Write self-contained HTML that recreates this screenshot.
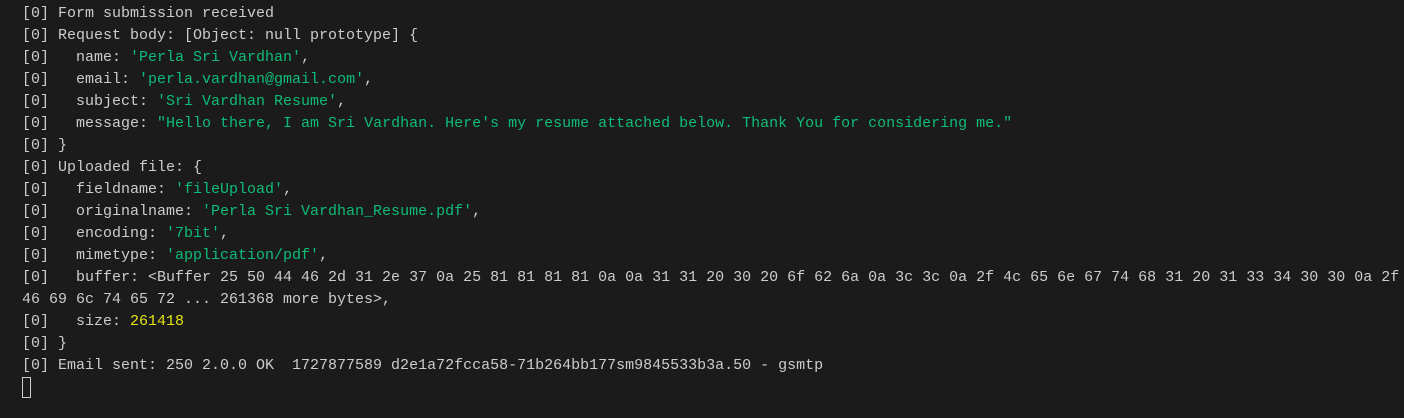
<!DOCTYPE html>
<html><head><style>
html,body{margin:0;padding:0;background:#1b1b1b;width:1404px;height:418px;overflow:hidden}
pre{margin:0;position:absolute;left:22px;top:3px;font-family:"Liberation Mono",monospace;font-size:15px;line-height:22px;color:#cccccc;white-space:pre}
.g{color:#0dbc79}.y{color:#e5e510}
.cur{position:absolute;left:22px;top:377px;width:7px;height:19px;border:1px solid #cccccc}
</style></head><body>
<pre>[0] Form submission received
[0] Request body: [Object: null prototype] {
[0]   name: <span class="g">'Perla Sri Vardhan'</span>,
[0]   email: <span class="g">'perla.vardhan@gmail.com'</span>,
[0]   subject: <span class="g">'Sri Vardhan Resume'</span>,
[0]   message: <span class="g">"Hello there, I am Sri Vardhan. Here's my resume attached below. Thank You for considering me."</span>
[0] }
[0] Uploaded file: {
[0]   fieldname: <span class="g">'fileUpload'</span>,
[0]   originalname: <span class="g">'Perla Sri Vardhan_Resume.pdf'</span>,
[0]   encoding: <span class="g">'7bit'</span>,
[0]   mimetype: <span class="g">'application/pdf'</span>,
[0]   buffer: &lt;Buffer 25 50 44 46 2d 31 2e 37 0a 25 81 81 81 81 0a 0a 31 31 20 30 20 6f 62 6a 0a 3c 3c 0a 2f 4c 65 6e 67 74 68 31 20 31 33 34 30 30 0a 2f
46 69 6c 74 65 72 ... 261368 more bytes&gt;,
[0]   size: <span class="y">261418</span>
[0] }
[0] Email sent: 250 2.0.0 OK  1727877589 d2e1a72fcca58-71b264bb177sm9845533b3a.50 - gsmtp</pre>
<div class="cur"></div>
</body></html>
